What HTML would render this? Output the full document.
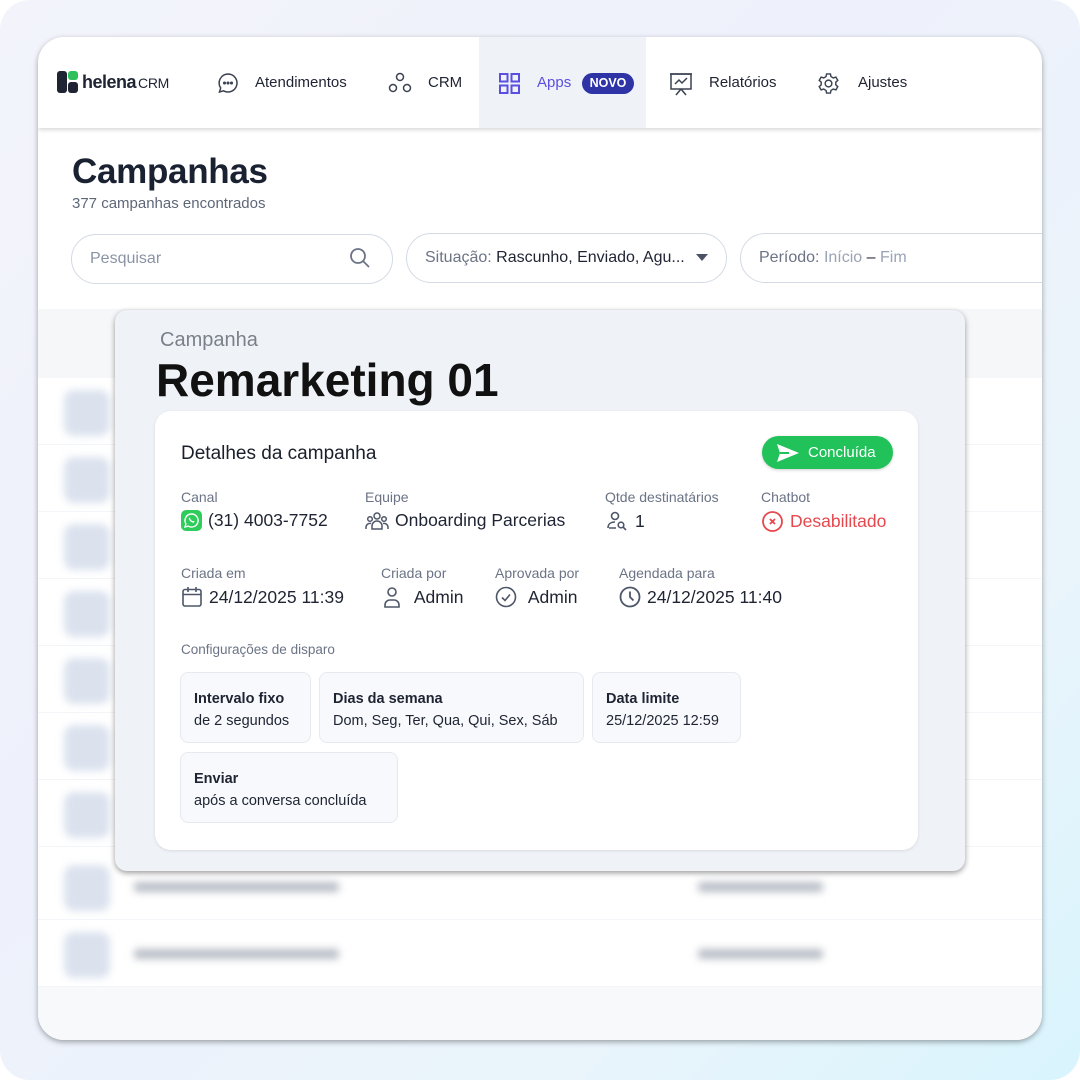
<!DOCTYPE html>
<html><head><meta charset="utf-8">
<style>
*{margin:0;padding:0;box-sizing:border-box}
body{width:1080px;height:1080px;overflow:hidden;font-family:"Liberation Sans",sans-serif;background:#fff;position:relative}
.bg{position:absolute;left:0;top:0;width:1080px;height:1080px;border-radius:30px;background:linear-gradient(135deg,#f3f4fb 0%,#eef1fb 40%,#eaf4fb 75%,#d9f4fd 100%)}
.win{position:absolute;left:38px;top:37px;width:1004px;height:1003px;border-radius:26px;background:#fff;overflow:hidden;box-shadow:0 2px 6px rgba(0,0,0,.35)}
.abs{position:absolute}
.nav{position:absolute;left:0;top:0;width:1004px;height:91px;background:#fff;box-shadow:0 2px 4px rgba(0,0,0,.15);z-index:2}
.nt{position:absolute;top:37px;font-size:15px;color:#1f2433}
.pill{position:absolute;height:50px;border:1.5px solid #d4dae4;border-radius:25px;background:#fff;font-size:16px;color:#8a93a5;padding:0 18px;line-height:47px}
.row{position:absolute;left:0;width:1004px;height:67px;border-bottom:1px solid #f3f5f8}
.ricon{position:absolute;left:26px;top:12px;width:46px;height:46px;border-radius:10px;background:#dbe2ee;filter:blur(4px)}
.rt{position:absolute;left:96px;top:29px;width:205px;height:10px;background:#b9bec7;filter:blur(4px);border-radius:3px}
.rd{position:absolute;left:660px;top:29px;width:125px;height:10px;background:#b9bec7;filter:blur(4px);border-radius:3px}
.modal{position:absolute;left:115px;top:310px;width:850px;height:561px;background:#eff3f8;border-radius:12px;box-shadow:0 2px 6px rgba(0,0,0,.4)}
.card{position:absolute;left:40px;top:101px;width:763px;height:439px;background:#fff;border-radius:16px;box-shadow:0 1px 3px rgba(0,0,0,.1)}
.lb{position:absolute;font-size:14px;color:#6b7385}
.vl{position:absolute;font-size:17.5px;color:#1f2433;display:flex;align-items:center;gap:6px;white-space:nowrap}
.box{position:absolute;background:#f7f9fc;border:1px solid #e6eaf0;border-radius:8px;padding:15px 13px;font-size:14.5px;color:#1f2433;line-height:22px}
.box b{display:block;font-weight:bold}
</style></head><body>
<div class="bg"></div>
<div class="win">
 <div class="nav">
  <div class="abs" style="left:19px;top:34px;width:10px;height:22px;background:#1f2433;border-radius:3px"></div>
  <div class="abs" style="left:30px;top:34px;width:10px;height:9px;background:#2ec05a;border-radius:3px"></div>
  <div class="abs" style="left:30px;top:45px;width:10px;height:11px;background:#1f2433;border-radius:3px"></div>
  <div class="abs" style="left:44px;top:35px;font-size:18px;font-weight:bold;color:#1f2433;letter-spacing:-0.5px">helena<span style="font-weight:normal;font-size:14px;margin-left:2px;letter-spacing:-0.3px">CRM</span></div>
  <svg class="abs" style="left:179px;top:35px" width="22" height="22" viewBox="0 0 22 22" fill="none" stroke="#3a4150" stroke-width="1.5"><path d="M11 2a9 9 0 1 1-4.5 16.8L2.5 20l1.2-4A9 9 0 0 1 11 2z"/><circle cx="7.5" cy="11" r=".8" fill="#3a4150"/><circle cx="11" cy="11" r=".8" fill="#3a4150"/><circle cx="14.5" cy="11" r=".8" fill="#3a4150"/></svg>
  <div class="nt" style="left:217px">Atendimentos</div>
  <svg class="abs" style="left:349px;top:34px" width="26" height="24" viewBox="0 0 26 24" fill="none" stroke="#3a4150" stroke-width="1.5"><circle cx="13" cy="6" r="3.5"/><circle cx="6" cy="17" r="3.5"/><circle cx="20" cy="17" r="3.5"/></svg>
  <div class="nt" style="left:390px">CRM</div>
  <div class="abs" style="left:441px;top:0;width:167px;height:91px;background:#eff2f7"></div>
  <svg class="abs" style="left:461px;top:36px" width="21" height="21" viewBox="0 0 21 21" fill="none" stroke="#5b4fe0" stroke-width="2"><rect x="1" y="1" width="7.5" height="7.5"/><rect x="12.5" y="1" width="7.5" height="7.5"/><rect x="1" y="12.5" width="7.5" height="7.5"/><rect x="12.5" y="12.5" width="7.5" height="7.5"/></svg>
  <div class="nt" style="left:499px;color:#5b4fe0">Apps</div>
  <div class="abs" style="left:544px;top:36px;width:52px;height:21px;border-radius:11px;background:#2e33a6;color:#fff;font-size:12.5px;font-weight:bold;text-align:center;line-height:21px">NOVO</div>
  <svg class="abs" style="left:631px;top:34px" width="24" height="26" viewBox="0 0 24 26" fill="none" stroke="#3a4150" stroke-width="1.5"><rect x="2" y="3" width="20" height="15"/><path d="M1 3h22M6 13l4-4 3 3 5-5M12 18l-5 6M12 18l5 6"/></svg>
  <div class="nt" style="left:671px">Relatórios</div>
  <svg class="abs" style="left:779px;top:35px" width="23" height="23" viewBox="0 0 24 24" fill="none" stroke="#3a4150" stroke-width="1.5"><circle cx="12" cy="12" r="3.5"/><path d="M10 2h4l.6 2.8 2.4 1.4 2.7-.9 2 3.4-2.1 1.9v2.8l2.1 1.9-2 3.4-2.7-.9-2.4 1.4L14 22h-4l-.6-2.8-2.4-1.4-2.7.9-2-3.4 2.1-1.9v-2.8L2.3 8.7l2-3.4 2.7.9 2.4-1.4z"/></svg>
  <div class="nt" style="left:820px">Ajustes</div>
 </div>
 <div class="abs" style="left:34px;top:115px;font-size:35px;font-weight:bold;color:#1a2232;letter-spacing:-0.3px">Campanhas</div>
 <div class="abs" style="left:34px;top:158px;font-size:15px;color:#5e6778">377 campanhas encontrados</div>
 <div class="pill" style="left:33px;top:197px;width:322px">Pesquisar
  <svg class="abs" style="left:276px;top:11px" width="24" height="24" viewBox="0 0 24 24" fill="none" stroke="#6b7385" stroke-width="1.8"><circle cx="10" cy="10" r="7"/><path d="M15 15l6 6"/></svg></div>
 <div class="pill" style="left:368px;top:196px;width:321px;color:#6b7385">Situação: <span style="color:#1f2433">Rascunho, Enviado, Agu...</span>
  <svg class="abs" style="left:289px;top:20px" width="12" height="8" viewBox="0 0 12 8"><path d="M0 0h12L6 7z" fill="#4a5263"/></svg></div>
 <div class="pill" style="left:702px;top:196px;width:340px;color:#6b7385">Período: <span style="color:#9aa3b5">Início</span> <span style="color:#1f2433">–</span> <span style="color:#9aa3b5">Fim</span></div>
 <div class="abs" style="left:0;top:272px;width:1004px;height:69px;background:#f6f7f9"></div>
 <div class="row" style="top:341px"><div class="ricon"></div></div>
 <div class="row" style="top:408px"><div class="ricon"></div></div>
 <div class="row" style="top:475px"><div class="ricon"></div></div>
 <div class="row" style="top:542px"><div class="ricon"></div></div>
 <div class="row" style="top:609px"><div class="ricon"></div></div>
 <div class="row" style="top:676px"><div class="ricon"></div></div>
 <div class="row" style="top:743px"><div class="ricon"></div></div>
 <div class="row" style="top:816px"><div class="ricon"></div><div class="rt"></div><div class="rd"></div></div>
 <div class="row" style="top:883px"><div class="ricon"></div><div class="rt"></div><div class="rd"></div></div>
 <div class="abs" style="left:0;top:950px;width:1004px;height:60px;background:#f8f9fb"></div>
</div>

<div class="modal">
 <div class="abs" style="left:45px;top:19px;font-size:20px;color:#7a808a">Campanha</div>
 <div class="abs" style="left:41px;top:43px;font-size:46px;font-weight:bold;color:#111;letter-spacing:0px">Remarketing 01</div>
 <div class="card">
  <div class="abs" style="left:26px;top:32px;font-size:19px;color:#1a1f2b">Detalhes da campanha</div>
  <div class="abs" style="left:607px;top:25px;width:131px;height:33px;border-radius:17px;background:#22c25a;color:#fff;font-size:15px;line-height:33px;padding-left:46px;box-shadow:0 1px 3px rgba(0,0,0,.2)">Concluída
   <svg class="abs" style="left:14px;top:7px" width="24" height="20" viewBox="0 0 24 20"><path d="M1 1l22 9-22 9 3-9z" fill="#fff"/><path d="M4 10h9" stroke="#22c25a" stroke-width="2"/></svg></div>

  <div class="lb" style="left:26px;top:78px">Canal</div>
  <div class="vl" style="left:26px;top:99px"><svg width="21" height="21" viewBox="0 0 21 21"><rect width="21" height="21" rx="5" fill="#2ecc5a"/><path d="M10.5 4a6.5 6.5 0 0 0-5.6 9.8L4 17l3.3-.9A6.5 6.5 0 1 0 10.5 4z" fill="none" stroke="#fff" stroke-width="1.4"/><path d="M8.3 7.8c.3 2 1.8 3.7 4 4.3l.8-.9" stroke="#fff" stroke-width="1.4" fill="none"/></svg>(31) 4003-7752</div>
  <div class="lb" style="left:210px;top:78px">Equipe</div>
  <div class="vl" style="left:210px;top:99px"><svg width="24" height="20" viewBox="0 0 24 20" fill="none" stroke="#4d5668" stroke-width="1.5"><circle cx="12" cy="5" r="3"/><circle cx="5" cy="8" r="2.3"/><circle cx="19" cy="8" r="2.3"/><path d="M7 18v-3a5 5 0 0 1 10 0v3zM1 18v-2a4 4 0 0 1 5-3.5M23 18v-2a4 4 0 0 0-5-3.5"/></svg>Onboarding Parcerias</div>
  <div class="lb" style="left:450px;top:78px">Qtde destinatários</div>
  <div class="vl" style="left:450px;top:99px"><svg width="24" height="22" viewBox="0 0 24 22" fill="none" stroke="#4d5668" stroke-width="1.6"><circle cx="10" cy="6" r="3.5"/><path d="M3 18c0-4 3-6 7-6M4 18h7"/><circle cx="16" cy="15" r="2.8"/><path d="M18 17l3 3"/></svg>1</div>
  <div class="lb" style="left:606px;top:78px">Chatbot</div>
  <div class="vl" style="left:606px;top:99px;color:#e5484d"><svg width="23" height="23" viewBox="0 0 23 23" fill="none" stroke="#e5484d" stroke-width="1.8"><circle cx="11.5" cy="11.5" r="9.5"/><path d="M9 9l5 5M14 9l-5 5"/></svg>Desabilitado</div>

  <div class="lb" style="left:26px;top:154px">Criada em</div>
  <div class="vl" style="left:26px;top:175px"><svg width="22" height="22" viewBox="0 0 22 22" fill="none" stroke="#4d5668" stroke-width="1.6"><rect x="2" y="3.5" width="18" height="16.5" rx="2"/><path d="M2 8.5h18M7 1v5M15 1v5"/></svg>24/12/2025 11:39</div>
  <div class="lb" style="left:226px;top:154px">Criada por</div>
  <div class="vl" style="left:226px;top:175px"><svg width="22" height="22" viewBox="0 0 22 22" fill="none" stroke="#4d5668" stroke-width="1.6"><circle cx="11" cy="6" r="4"/><path d="M4 21v-2a5 5 0 0 1 5-5h4a5 5 0 0 1 5 5v2z"/></svg>&nbsp;Admin</div>
  <div class="lb" style="left:340px;top:154px">Aprovada por</div>
  <div class="vl" style="left:340px;top:175px"><svg width="22" height="22" viewBox="0 0 22 22" fill="none" stroke="#4d5668" stroke-width="1.6"><circle cx="11" cy="11" r="9.5"/><path d="M7 11.5l3 3 5-6"/></svg>&nbsp;Admin</div>
  <div class="lb" style="left:464px;top:154px">Agendada para</div>
  <div class="vl" style="left:464px;top:175px"><svg width="22" height="22" viewBox="0 0 22 22" fill="none" stroke="#4d5668" stroke-width="1.8"><circle cx="11" cy="11" r="9.5"/><path d="M11 5.5V11l3.5 3.5"/></svg>24/12/2025 11:40</div>

  <div class="lb" style="left:26px;top:231px;font-size:13.5px">Configurações de disparo</div>
  <div class="box" style="left:25px;top:261px;width:131px;height:71px"><b>Intervalo fixo</b>de 2 segundos</div>
  <div class="box" style="left:164px;top:261px;width:265px;height:71px"><b>Dias da semana</b>Dom, Seg, Ter, Qua, Qui, Sex, Sáb</div>
  <div class="box" style="left:437px;top:261px;width:149px;height:71px"><b>Data limite</b>25/12/2025 12:59</div>
  <div class="box" style="left:25px;top:341px;width:218px;height:71px"><b>Enviar</b>após a conversa concluída</div>
 </div>
</div>
</body></html>
